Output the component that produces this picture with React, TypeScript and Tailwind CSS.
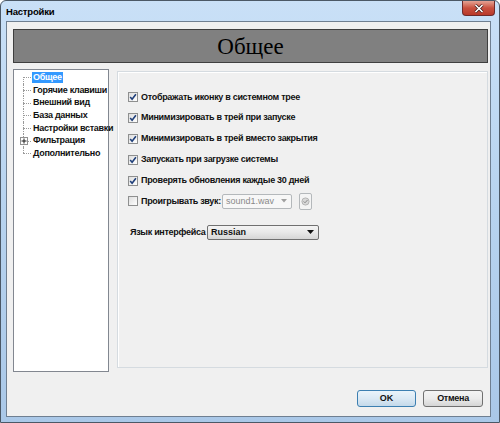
import React from 'react';

const ui = "font-['Liberation_Sans',Arial,sans-serif]";

const treeItems = [
  'Общее',
  'Горячие клавиши',
  'Внешний вид',
  'База данных',
  'Настройки вставки',
  'Фильтрация',
  'Дополнительно',
];

const options = [
  { label: 'Отображать иконку в системном трее', checked: true },
  { label: 'Минимизировать в трей при запуске', checked: true },
  { label: 'Минимизировать в трей вместо закрытия', checked: true },
  { label: 'Запускать при загрузке системы', checked: true },
  { label: 'Проверять обновления каждые 30 дней', checked: true },
];

function Check({ checked }: { checked: boolean }) {
  return (
    <span className="w-[10px] h-[10px] border border-[#8e8f8f] bg-gradient-to-br from-[#dedede] to-white flex items-center justify-center shrink-0">
      {checked && (
        <svg width="8" height="8" viewBox="0 0 8 8">
          <path d="M1.2 4 L3.1 6.2 L6.9 1.2" stroke="#1f3f7a" strokeWidth="1.6" fill="none" />
        </svg>
      )}
    </span>
  );
}

function TreeRow({ text, index, last }: { text: string; index: number; last: boolean }) {
  const selected = index === 0;
  const expandable = text === 'Фильтрация';
  return (
    <div className="h-[12.7px] flex items-center">
      <div className="relative w-[17px] h-full shrink-0">
        {/* vertical connector */}
        <span
          className={
            'absolute left-[8px] w-0 border-l border-dotted border-[#9a9a9a] ' +
            (index === 0 ? 'top-1/2 bottom-0' : last ? 'top-0 h-1/2' : 'top-0 bottom-0')
          }
        />
        {/* horizontal connector */}
        <span className="absolute left-[8px] right-[1px] top-1/2 h-0 border-t border-dotted border-[#9a9a9a]" />
        {expandable && (
          <span className="absolute left-[5px] top-[2.5px] w-[8px] h-[8px] border border-[#919191] bg-white flex items-center justify-center">
            <svg width="6" height="6" viewBox="0 0 6 6">
              <path d="M0.5 3 H5.5 M3 0.5 V5.5" stroke="#1b1b1b" strokeWidth="1" />
            </svg>
          </span>
        )}
      </div>
      <span
        className={
          'text-[9px] font-bold leading-[11px] px-[1px] whitespace-nowrap tracking-[-0.3px] ' +
          (selected ? 'bg-[#3399ff] text-white' : 'text-[#111]')
        }
      >
        {text}
      </span>
    </div>
  );
}

export default function App() {
  return (
    <div className={`w-[500px] h-[423px] ${ui} bg-white`}>
      <div className="w-full h-full border border-[#4b5866] rounded-t-[6px] bg-gradient-to-b from-[#c9e0f7] via-[#b7d3ef] to-[#aac8e8] flex flex-col">
        {/* Title bar */}
        <div className="h-[20px] flex items-start relative">
          <span className="mt-[4px] ml-[5px] text-[9.5px] font-bold text-black tracking-[-0.2px]">Настройки</span>
          <button className="ml-auto mr-[4px] w-[33px] h-[15px] rounded-b-[4px] border border-[#6e2a2a] border-t-0 bg-gradient-to-b from-[#e4a294] via-[#c9503f] to-[#b8392a] flex items-center justify-center">
            <svg width="10" height="9" viewBox="0 0 10 9">
              <path d="M1.5 1 L8.5 8 M8.5 1 L1.5 8" stroke="#3b1a1a" strokeWidth="3" />
              <path d="M1.5 1 L8.5 8 M8.5 1 L1.5 8" stroke="#ffffff" strokeWidth="1.6" />
            </svg>
          </button>
        </div>

        {/* Client area */}
        <div className="flex-1 ml-[5px] mr-[8px] mb-[5px] border border-[#6f7f91] bg-[#f0f0f0] flex flex-col pl-[6px] pr-[2px] pt-[7px]">
          {/* Header */}
          <div className="h-[34px] bg-[#808080] border border-[#3f3f3f] flex items-center justify-center">
            <span className="font-['Liberation_Serif','Times_New_Roman',serif] text-[23px] text-black leading-none">Общее</span>
          </div>

          <div className="flex items-start gap-[8px] mt-[6px]">
            {/* Tree */}
            <div className="w-[96px] h-[303px] bg-white border border-[#828790] pt-[1px] pl-[1px] flex flex-col">
              {treeItems.map((t, i) => (
                <TreeRow key={t} text={t} index={i} last={i === treeItems.length - 1} />
              ))}
            </div>

            {/* Settings panel */}
            <div className="flex-1 h-[297px] mt-[2px] border border-[#d5dbe0] shadow-[inset_1px_1px_0_#ffffff] pl-[10px] pt-[15px] flex flex-col">
              {options.map((o) => (
                <div key={o.label} className="h-[20.8px] flex items-center gap-[3px]">
                  <Check checked={o.checked} />
                  <span className="text-[9px] font-bold text-[#111] whitespace-nowrap tracking-[-0.3px]">{o.label}</span>
                </div>
              ))}
              <div className="h-[20.8px] flex items-center">
                <Check checked={false} />
                <span className="ml-[3px] w-[81px] text-[9px] font-bold text-[#111] whitespace-nowrap tracking-[-0.3px]">Проигрывать звук:</span>
                <div className="w-[70px] h-[15px] border border-[#b4b8bb] rounded-[2px] bg-[#f7f7f7] flex items-center pl-[3px] pr-[4px]">
                  <span className="text-[9px] text-[#8a8a8a] flex-1">sound1.wav</span>
                  <svg width="6" height="4" viewBox="0 0 6 4">
                    <path d="M0 0 H6 L3 3.5 Z" fill="#a0a0a0" />
                  </svg>
                </div>
                <div className="ml-[7px] w-[13px] h-[17px] border border-[#b4b8bb] rounded-[2px] bg-[#f4f4f4] flex items-center justify-center">
                  <svg width="9" height="9" viewBox="0 0 9 9">
                    <circle cx="4.5" cy="4.5" r="3.6" fill="#d8d8d8" stroke="#a8a8a8" strokeWidth="0.8" />
                    <path d="M2.6 4.4 L4 5.8 L6.5 3" stroke="#8a8a8a" strokeWidth="1" fill="none" />
                  </svg>
                </div>
              </div>

              <div className="mt-[10px] h-[21px] flex items-center pl-[2px]">
                <span className="w-[77px] text-[9px] font-bold text-[#111] whitespace-nowrap tracking-[-0.3px]">Язык интерфейса</span>
                <div className="w-[112px] h-[15px] border border-[#707070] rounded-[2px] bg-gradient-to-b from-[#f4f4f4] via-[#e8e8e8] to-[#d6d6d6] flex items-center pl-[3px] pr-[4px]">
                  <span className="text-[9px] font-bold text-[#111] flex-1">Russian</span>
                  <svg width="7" height="4" viewBox="0 0 7 4">
                    <path d="M0 0 H7 L3.5 4 Z" fill="#111" />
                  </svg>
                </div>
              </div>
            </div>
          </div>

          {/* Buttons */}
          <div className="flex justify-end gap-[7px] mt-[18px] pr-[5px]">
            <button className="w-[59px] h-[17px] rounded-[3px] border border-[#3c7fb1] bg-gradient-to-b from-[#eaf4fb] via-[#dbe9f4] to-[#c4d9ea] text-[9px] font-bold text-[#111] flex items-center justify-center">
              OK
            </button>
            <button className="w-[60px] h-[17px] rounded-[3px] border border-[#707070] bg-gradient-to-b from-[#f4f4f4] via-[#ebebeb] to-[#d5d5d5] text-[9px] font-bold text-[#111] flex items-center justify-center tracking-[-0.3px]">
              Отмена
            </button>
          </div>
        </div>
      </div>
    </div>
  );
}
